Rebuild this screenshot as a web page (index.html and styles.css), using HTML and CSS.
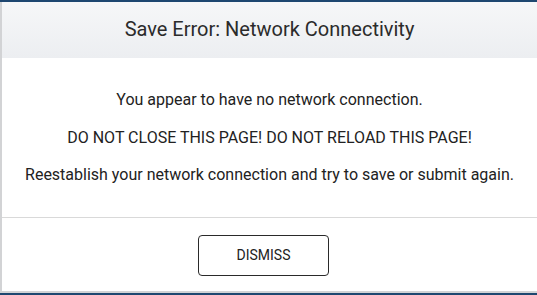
FILE: index.html
```html
<!DOCTYPE html>
<html lang="en">
<head>
<meta charset="utf-8">
<title>Save Error</title>
<link rel="stylesheet" href="styles.css">
</head>
<body>
<div class="dialog">
  <div class="dialog-header">
    <h1 class="dialog-title">Save Error: Network Connectivity</h1>
  </div>
  <div class="dialog-body">
    <p class="msg">You appear to have no network connection.</p>
    <p class="msg">DO NOT CLOSE THIS PAGE! DO NOT RELOAD THIS PAGE!</p>
    <p class="msg">Reestablish your network connection and try to save or submit again.</p>
  </div>
  <div class="dialog-footer">
    <button class="btn" type="button">DISMISS</button>
  </div>
</div>
</body>
</html>
```
FILE: styles.css
```css
html, body {
  margin: 0;
  padding: 0;
}
body {
  background: #1e4770;
  font-family: Roboto, "Liberation Sans", Arial, sans-serif;
  color: #222;
  padding: 2px 0;
  width: 537px;
  height: 295px;
  box-sizing: border-box;
  overflow: hidden;
}
.dialog {
  background: #fff;
  border-left: 2px solid #d2d3d5;
  border-bottom: 2px solid #d2d3d5;
  height: 291px;
  box-sizing: border-box;
  display: flex;
  flex-direction: column;
}
.dialog-header {
  height: 56px;
  background: linear-gradient(#f6f7f8, #eceef1);
  display: flex;
  align-items: center;
  justify-content: center;
}
.dialog-title {
  margin: 0;
  font-size: 20px;
  font-weight: 400;
  color: #2b2b2b;
  line-height: 24px;
  padding-bottom: 2px;
}
.dialog-body {
  height: 160px;
  box-sizing: border-box;
  padding-top: 31px;
  border-bottom: 1px solid #d9d9d9;
  display: flex;
  flex-direction: column;
  align-items: center;
  gap: 15.5px;
}
.msg {
  margin: 0;
  font-size: 16px;
  line-height: 22px;
  color: #222;
  text-align: center;
}
.dialog-footer {
  flex: 1;
  display: flex;
  align-items: center;
  justify-content: center;
  padding-right: 12px;
}
.btn {
  width: 131px;
  height: 41px;
  border: 1px solid #2a2a2a;
  border-radius: 4px;
  background: #fff;
  font-family: Roboto, "Liberation Sans", Arial, sans-serif;
  font-size: 14px;
  color: #222;
  padding: 0;
  margin-top: 1px;
}
```
